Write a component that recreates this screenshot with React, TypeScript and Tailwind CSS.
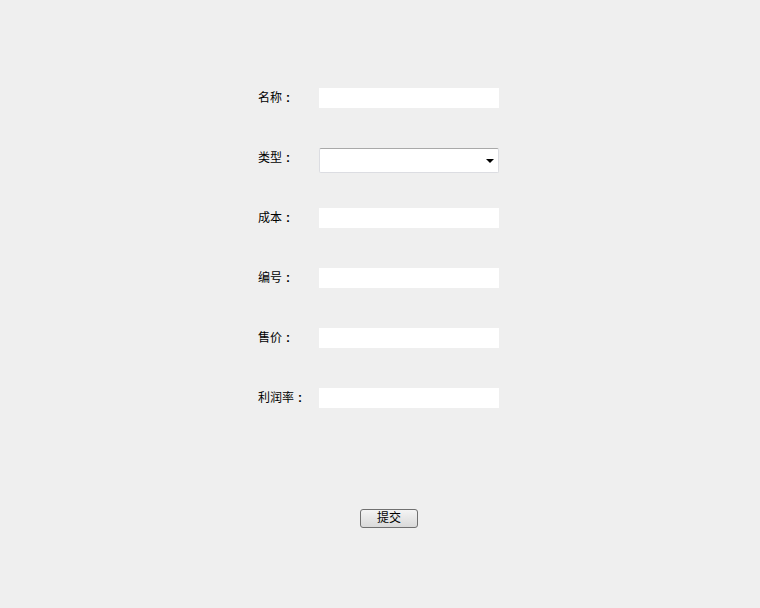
import React from 'react';

const fields = [
    { label: '名称', type: 'text' },
    { label: '类型', type: 'select' },
    { label: '成本', type: 'text' },
    { label: '编号', type: 'text' },
    { label: '售价', type: 'text' },
    { label: '利润率', type: 'text' },
];

export default function App() {
    return (
        <div
            className="w-[760px] h-[608px] bg-[#efefef] text-[12px] text-black"
            style={{ fontFamily: '"Liberation Sans", "Noto Sans CJK SC", sans-serif' }}
        >
            <form className="pt-[88px] pl-[258px]" onSubmit={(e) => e.preventDefault()}>
                {fields.map((f) => (
                    <div key={f.label} className="flex items-start h-[60px]">
                        <label className="w-[61px] leading-[18px] pt-[1px] whitespace-nowrap">
                            {f.label}
                            <span className="inline-block w-[12px] text-center font-bold">:</span>
                        </label>
                        {f.type === 'select' ? (
                            <div className="relative w-[180px] h-[25px]">
                                <select className="appearance-none w-full h-full bg-white border border-[#dcdde2] border-t-[#a9a9a9] rounded-[2px] outline-none">
                                    <option value=""></option>
                                </select>
                                <span className="absolute right-[5px] top-[11px] w-0 h-0 border-l-[4px] border-r-[4px] border-t-[4px] border-l-transparent border-r-transparent border-t-black" />
                            </div>
                        ) : (
                            <input type="text" className="w-[180px] h-[20px] bg-white outline-none px-1" />
                        )}
                    </div>
                ))}
                <div className="pt-[61px] pl-[102px]">
                    <button
                        type="submit"
                        className="w-[58px] h-[19px] leading-[17px] border border-[#707070] rounded-[3px] bg-gradient-to-b from-[#f4f4f4] to-[#dadada] text-[12px]"
                    >
                        提交
                    </button>
                </div>
            </form>
        </div>
    );
}
